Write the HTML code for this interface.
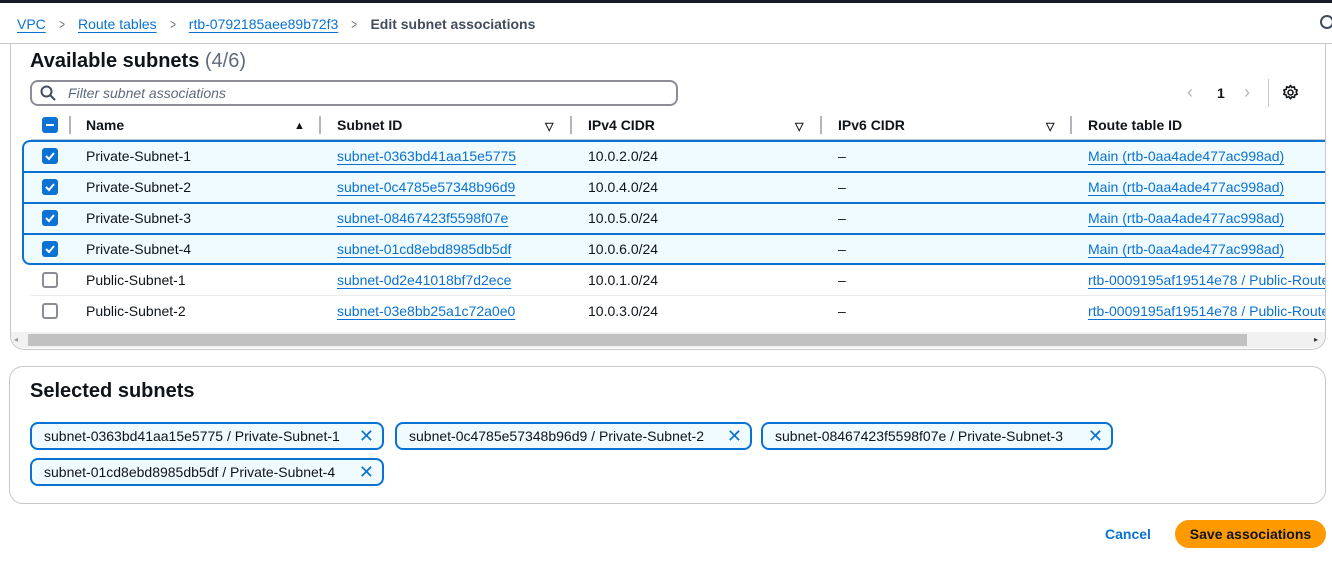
<!DOCTYPE html>
<html><head><meta charset="utf-8"><style>
*{box-sizing:border-box;margin:0;padding:0}
body{width:1332px;height:566px;overflow:hidden;background:#fff;font-family:"Liberation Sans",sans-serif;font-size:14px;color:#0f141a;position:relative}
.a{position:absolute;white-space:nowrap}
.lk{color:#0972d3;text-decoration:underline;text-underline-offset:3px}
.cb{position:absolute;width:16px;height:16px;border-radius:3px}
.on{background:#0972d3}
.off{border:2px solid #8c8c94;background:#fff}
.sep{position:absolute;width:2px;height:18px;background:#b4b4bb;top:116px}
.srt{position:absolute;top:120px;font-size:11px}
.tok{position:absolute;height:28px;border:2px solid #0972d3;border-radius:8px;background:#f0fbff;padding:0 0 0 12px;line-height:24px;font-size:14px;white-space:nowrap}
.tok b{position:absolute;right:8px;top:0;font-weight:normal;color:#0972d3;font-size:18px}
.chev{color:#5f6b7a;margin:0 12px;display:inline-block;transform:scaleX(.7)}
</style></head><body>
<div class="a" style="left:0;top:0;width:1332px;height:3px;background:#16191f"></div>
<div class="a" style="left:17px;top:16px;font-size:14px"><span class="lk">VPC</span><span class="chev">&gt;</span><span class="lk">Route tables</span><span class="chev">&gt;</span><span class="lk">rtb-0792185aee89b72f3</span><span class="chev">&gt;</span><span style="color:#414d5c;font-weight:bold">Edit subnet associations</span></div>
<div class="a" style="left:1320px;top:15px;width:14px;height:14px;border:2.5px solid #414d5c;border-radius:50%"></div>
<div class="a" style="left:0;top:43px;width:1332px;height:1px;background:#c6c6cd"></div>

<div class="a" style="left:10px;top:44px;width:1316px;height:306px;border:1px solid #c6c6cd;border-top:none;border-radius:0 0 14px 14px;overflow:hidden">
 <div class="a" style="left:0;top:288px;width:1316px;height:16px;background:#f1f1f1"></div>
 <div class="a" style="left:17px;top:290px;width:1219px;height:12px;background:#c1c1c1"></div>
 <div class="a" style="left:3px;top:291px;font-size:8px;color:#999">◂</div>
 <div class="a" style="left:1303px;top:291px;font-size:8px;color:#333">▸</div>
</div>

<div class="a" style="left:30px;top:50px;font-size:20px;font-weight:bold">Available subnets <span style="font-weight:normal;color:#5f6b7a">(4/6)</span></div>
<div class="a" style="left:30px;top:80px;width:648px;height:26px;border:2px solid #8c8c94;border-radius:8px"></div>
<svg class="a" style="left:40px;top:85px" width="16" height="16" viewBox="0 0 16 16"><circle cx="6.5" cy="6.5" r="5" fill="none" stroke="#414d5c" stroke-width="2"/><path d="M10.5 10.5L15 15" stroke="#414d5c" stroke-width="2"/></svg>
<div class="a" style="left:68px;top:85px;font-style:italic;color:#5f6b7a">Filter subnet associations</div>
<div class="a" style="left:1187px;top:82px;color:#b4b4bb;font-size:18px">&#x2039;</div>
<div class="a" style="left:1217px;top:85px;font-weight:bold">1</div>
<div class="a" style="left:1244px;top:82px;color:#b4b4bb;font-size:18px">&#x203A;</div>
<div class="a" style="left:1268px;top:79px;width:1px;height:28px;background:#c6c6cd"></div>
<svg class="a" style="left:1282px;top:84px" width="17" height="17" viewBox="0 0 24 24"><path d="M12 2l2 3 3.5-1 .5 3.5 3.5 1-1.5 3 1.5 3-3.5 1-.5 3.5-3.5-1-2 3-2-3-3.5 1-.5-3.5-3.5-1 1.5-3-1.5-3 3.5-1 .5-3.5 3.5 1z" fill="none" stroke="#0f141a" stroke-width="2.2" stroke-linejoin="round"/><circle cx="12" cy="12" r="3.5" fill="none" stroke="#0f141a" stroke-width="2.2"/></svg>

<div class="cb on" style="left:42px;top:117px"><div style="position:absolute;left:4px;top:7px;width:8px;height:2px;background:#fff"></div></div>
<div class="sep" style="left:69px"></div>
<div class="a" style="left:86px;top:117px;font-weight:bold">Name</div>
<div class="srt" style="left:294px">▲</div>
<div class="sep" style="left:319px"></div>
<div class="a" style="left:337px;top:117px;font-weight:bold">Subnet ID</div>
<div class="srt" style="left:545px;font-weight:bold">▽</div>
<div class="sep" style="left:570px"></div>
<div class="a" style="left:588px;top:117px;font-weight:bold">IPv4 CIDR</div>
<div class="srt" style="left:795px;font-weight:bold">▽</div>
<div class="sep" style="left:820px"></div>
<div class="a" style="left:838px;top:117px;font-weight:bold">IPv6 CIDR</div>
<div class="srt" style="left:1046px;font-weight:bold">▽</div>
<div class="sep" style="left:1070px"></div>
<div class="a" style="left:1088px;top:117px;font-weight:bold">Route table ID</div>
<div class="a" style="left:31px;top:139px;width:1294px;height:1px;background:#c6c6cd"></div>

<div class="a" style="left:22px;top:140px;width:1303px;height:125px;background:#f0fbff;border:2px solid #0972d3;border-right:none;border-radius:8px 0 0 8px"></div>
<div class="a" style="left:22px;top:171px;width:1303px;height:2px;background:#0972d3"></div>
<div class="a" style="left:22px;top:202px;width:1303px;height:2px;background:#0972d3"></div>
<div class="a" style="left:22px;top:233px;width:1303px;height:2px;background:#0972d3"></div>
<div class="a" style="left:31px;top:295px;width:1294px;height:1px;background:#e9ebed"></div>

<div class="cb on" style="left:42px;top:148px"><svg width="16" height="16"><path d="M4 8l3 3 5-6" fill="none" stroke="#fff" stroke-width="2"/></svg></div>
<div class="a" style="left:86px;top:148px">Private-Subnet-1</div><div class="a lk" style="left:337px;top:148px">subnet-0363bd41aa15e5775</div><div class="a" style="left:588px;top:148px">10.0.2.0/24</div><div class="a" style="left:838px;top:148px">–</div><div class="a lk" style="left:1088px;top:148px">Main (rtb-0aa4ade477ac998ad)</div>
<div class="cb on" style="left:42px;top:179px"><svg width="16" height="16"><path d="M4 8l3 3 5-6" fill="none" stroke="#fff" stroke-width="2"/></svg></div>
<div class="a" style="left:86px;top:179px">Private-Subnet-2</div><div class="a lk" style="left:337px;top:179px">subnet-0c4785e57348b96d9</div><div class="a" style="left:588px;top:179px">10.0.4.0/24</div><div class="a" style="left:838px;top:179px">–</div><div class="a lk" style="left:1088px;top:179px">Main (rtb-0aa4ade477ac998ad)</div>
<div class="cb on" style="left:42px;top:210px"><svg width="16" height="16"><path d="M4 8l3 3 5-6" fill="none" stroke="#fff" stroke-width="2"/></svg></div>
<div class="a" style="left:86px;top:210px">Private-Subnet-3</div><div class="a lk" style="left:337px;top:210px">subnet-08467423f5598f07e</div><div class="a" style="left:588px;top:210px">10.0.5.0/24</div><div class="a" style="left:838px;top:210px">–</div><div class="a lk" style="left:1088px;top:210px">Main (rtb-0aa4ade477ac998ad)</div>
<div class="cb on" style="left:42px;top:241px"><svg width="16" height="16"><path d="M4 8l3 3 5-6" fill="none" stroke="#fff" stroke-width="2"/></svg></div>
<div class="a" style="left:86px;top:241px">Private-Subnet-4</div><div class="a lk" style="left:337px;top:241px">subnet-01cd8ebd8985db5df</div><div class="a" style="left:588px;top:241px">10.0.6.0/24</div><div class="a" style="left:838px;top:241px">–</div><div class="a lk" style="left:1088px;top:241px">Main (rtb-0aa4ade477ac998ad)</div>
<div class="cb off" style="left:42px;top:272px"></div>
<div class="a" style="left:86px;top:272px">Public-Subnet-1</div><div class="a lk" style="left:337px;top:272px">subnet-0d2e41018bf7d2ece</div><div class="a" style="left:588px;top:272px">10.0.1.0/24</div><div class="a" style="left:838px;top:272px">–</div>
<div class="cb off" style="left:42px;top:303px"></div>
<div class="a" style="left:86px;top:303px">Public-Subnet-2</div><div class="a lk" style="left:337px;top:303px">subnet-03e8bb25a1c72a0e0</div><div class="a" style="left:588px;top:303px">10.0.3.0/24</div><div class="a" style="left:838px;top:303px">–</div>
<div class="a" style="left:1088px;top:268px;width:237px;height:60px;overflow:hidden"><div class="lk" style="position:absolute;top:4px;white-space:nowrap">rtb-0009195af19514e78 / Public-Route</div><div class="lk" style="position:absolute;top:35px;white-space:nowrap">rtb-0009195af19514e78 / Public-Route</div></div>

<div class="a" style="left:9px;top:366px;width:1317px;height:138px;border:1px solid #c6c6cd;border-radius:14px"></div>
<div class="a" style="left:30px;top:380px;font-size:20px;font-weight:bold">Selected subnets</div>
<div class="tok" style="left:30px;top:422px;width:354px">subnet-0363bd41aa15e5775 / Private-Subnet-1<b>✕</b></div>
<div class="tok" style="left:395px;top:422px;width:357px">subnet-0c4785e57348b96d9 / Private-Subnet-2<b>✕</b></div>
<div class="tok" style="left:761px;top:422px;width:352px">subnet-08467423f5598f07e / Private-Subnet-3<b>✕</b></div>
<div class="tok" style="left:30px;top:458px;width:354px">subnet-01cd8ebd8985db5df / Private-Subnet-4<b>✕</b></div>

<div class="a" style="left:1105px;top:526px;font-weight:bold;color:#0972d3">Cancel</div>
<div class="a" style="left:1175px;top:520px;width:151px;height:28px;border-radius:14px;background:#ff9900;font-weight:bold;text-align:center;line-height:28px">Save associations</div>
</body></html>
